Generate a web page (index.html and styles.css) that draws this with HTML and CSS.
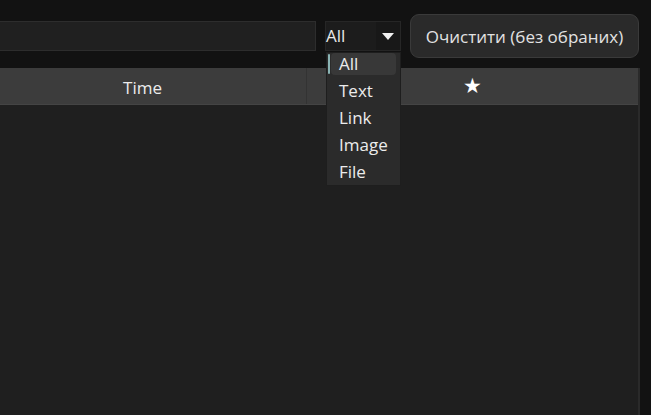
FILE: index.html
```html
<!DOCTYPE html>
<html>
<head>
<meta charset="utf-8">
<link rel="stylesheet" href="styles.css">
</head>
<body>
<div class="app">
  <div class="toolbar">
    <div class="search"></div>
    <div class="combo">
      <span class="combo-text">All</span>
      <span class="combo-arrow"><svg width="12" height="7" viewBox="0 0 12 7"><path d="M0 0 H12 L6 7 Z" fill="#f0f0f0"/></svg></span>
    </div>
    <button class="clear">Очистити (без обраних)</button>
  </div>
  <div class="table">
    <div class="thead">
      <div class="th time">Time</div>
      <div class="th star">★</div>
    </div>
    <div class="tbody"></div>
  </div>
  <ul class="popup">
    <li class="item selected">All</li>
    <li class="item">Text</li>
    <li class="item">Link</li>
    <li class="item">Image</li>
    <li class="item">File</li>
  </ul>
</div>
</body>
</html>
```
FILE: styles.css
```css
* { box-sizing: border-box; }
html, body { margin: 0; padding: 0; }
body {
  background: #121212;
  font-family: "Open Sans", "Noto Sans", sans-serif;
  color: #e6e6e6;
  width: 651px;
  height: 415px;
  overflow: hidden;
}
.app { position: relative; width: 651px; height: 415px; display: flex; flex-direction: column; }
.toolbar {
  height: 68px;
  display: flex;
  align-items: flex-start;
  padding-right: 12px;
}
.search {
  margin-top: 21px;
  width: 316px;
  height: 30px;
  background: #202020;
  border: 1px solid #2d2d2d;
  border-left: none;
}
.combo {
  margin-top: 21px;
  margin-left: 9px;
  width: 76px;
  height: 30px;
  display: flex;
  background: #1c1c1c;
  border: 1px solid #262626;
}
.combo-text {
  flex: 1;
  font-size: 17px;
  line-height: 28px;
  padding-left: 0;
  color: #e8e8e8;
}
.combo-arrow {
  width: 24px;
  background: #181818;
  display: flex;
  align-items: center;
  justify-content: center;
}
.clear {
  margin-top: 14px;
  margin-left: 9px;
  width: 229px;
  height: 44px;
  background: #2a2a2a;
  border: 1px solid #3a3a3a;
  border-radius: 9px;
  color: #e2e2e2;
  font-family: inherit;
  font-size: 17px;
  padding: 0;
}
.table {
  flex: 1;
  width: 661px;
  margin-left: -21px;
  display: flex;
  flex-direction: column;
  border-right: 2px solid #2a2a2a;
  background: #1f1f1f;
}
.thead {
  height: 37px;
  display: flex;
  background: #3c3c3c;
  border-bottom: 1px solid #444;
}
.th {
  display: flex;
  align-items: center;
  justify-content: center;
  font-size: 17px;
  color: #ececec;
  padding-top: 2px;
}
.time { width: 328px; border-right: 1px solid #333; }
.star { flex: 1; color: #fff; font-family: "DejaVu Sans", sans-serif; font-size: 21px; padding-top: 0; }
.tbody { flex: 1; }
.popup {
  position: absolute;
  left: 326px;
  top: 52px;
  width: 75px;
  height: 134px;
  margin: 0;
  padding: 0 4px;
  list-style: none;
  background: #2b2b2b;
  border: 1px solid #1e1e1e;
}
.item {
  position: relative;
  height: 27px;
  line-height: 27px;
  font-size: 17px;
  padding-left: 8px;
  color: #ececec;
}
.item.selected {
  height: 22px;
  line-height: 22px;
  margin-bottom: 2px;
  background: #383838;
  border-radius: 4px;
}
.item.selected::before {
  content: "";
  position: absolute;
  left: -3px;
  top: 1px;
  width: 2px;
  height: 20px;
  background: #8ab4b4;
  border-radius: 1px;
}
```
